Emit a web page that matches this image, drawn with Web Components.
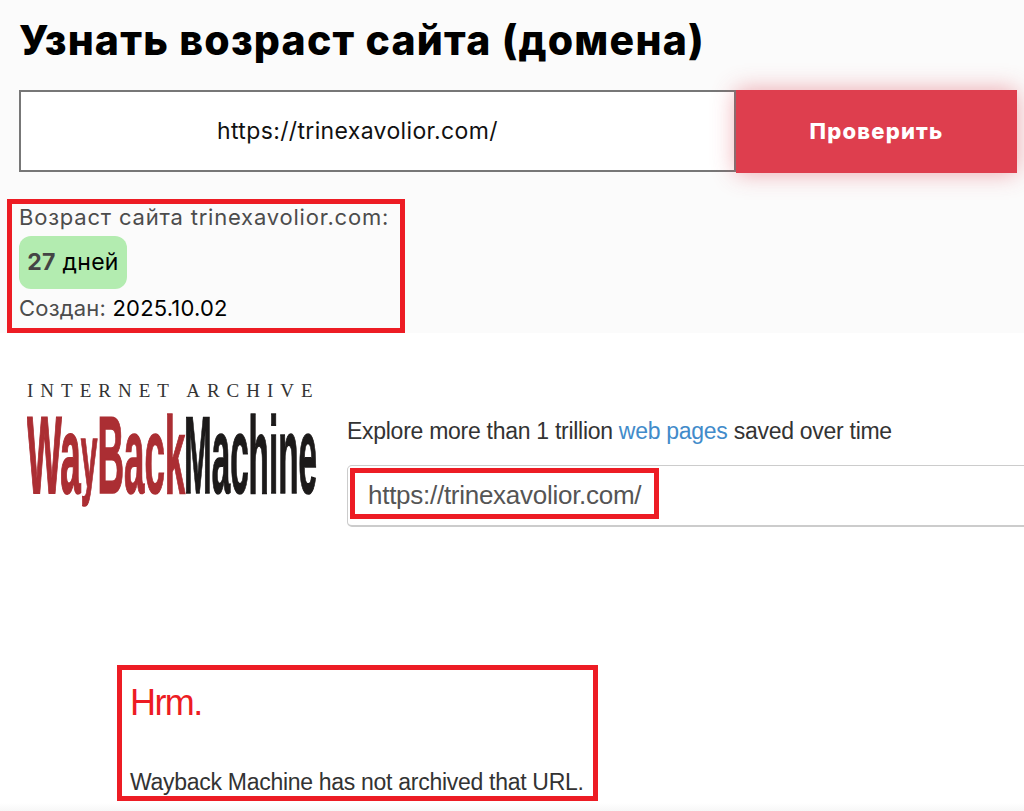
<!DOCTYPE html>
<html lang="ru">
<head>
<meta charset="utf-8">
<title>Возраст сайта</title>
<style>
  html, body { margin: 0; padding: 0; background: #fff; }
  body { width: 1024px; height: 811px; overflow: hidden; }
</style>
</head>
<body>
<age-page>
  <age-form slot="form" url="https://trinexavolior.com/"></age-form>
  <red-frame slot="result" style="--frame-w: 398px; --frame-h: 134px; --frame-pad: 5px 0 0 12px;">
    <age-result domain="trinexavolior.com" days="27" created="2025.10.02"></age-result>
  </red-frame>
</age-page>
<wayback-header url="https://trinexavolior.com/"></wayback-header>
<wayback-message></wayback-message>

<script>
class RedFrame extends HTMLElement {
  constructor() {
    super()
    this.shadow = this.attachShadow({ mode: 'open' })
  }
  connectedCallback() {
    this.shadow.innerHTML = /*html*/`
      <style>
        :host {
          display: block;
          box-sizing: border-box;
          width: var(--frame-w);
          height: var(--frame-h);
          padding: var(--frame-pad, 0);
          border: 5px solid #ed1c24;
          background: var(--frame-bg, transparent);
        }
      </style>
      <slot></slot>
    `
  }
}

class AgePage extends HTMLElement {
  constructor() {
    super()
    this.shadow = this.attachShadow({ mode: 'open' })
  }
  connectedCallback() {
    this.shadow.innerHTML = /*html*/`
      <style>
        :host {
          display: block;
          box-sizing: border-box;
          height: 333px;
          padding: 0 7px;
          background: #fbfbfb;
          font-family: Inter, "Liberation Sans", sans-serif;
        }
        h1 {
          margin: 0 0 0 12px;
          padding-top: 14px;
          height: 90px;
          box-sizing: border-box;
          font-size: 41px;
          line-height: 52px;
          font-weight: 800;
          color: #000;
          letter-spacing: 1.2px;
          white-space: nowrap;
        }
        .result { margin-top: 26px; }
      </style>
      <h1>Узнать возраст сайта (домена)</h1>
      <slot name="form"></slot>
      <div class="result"><slot name="result"></slot></div>
    `
  }
}

class AgeForm extends HTMLElement {
  constructor() {
    super()
    this.shadow = this.attachShadow({ mode: 'open' })
  }
  connectedCallback() {
    this.shadow.innerHTML = /*html*/`
      <style>
        :host {
          display: flex;
          margin-left: 12px;
          width: 998px;
          height: 83px;
        }
        .input {
          box-sizing: border-box;
          width: 717px;
          height: 82px;
          padding-right: 40px;
          border: 2px solid #777;
          background: #fff;
          color: #111;
          font-size: 23px;
          letter-spacing: .35px;
          line-height: 78px;
          text-align: center;
        }
        .btn {
          width: 281px;
          height: 83px;
          background: #de3e4e;
          box-shadow: 0 0 22px rgba(222, 62, 78, .45);
          color: #fff;
          font-size: 22px;
          font-weight: 800;
          letter-spacing: 1.2px;
          line-height: 83px;
          text-align: center;
        }
      </style>
      <div class="input">${this.getAttribute('url')}</div>
      <div class="btn">Проверить</div>
    `
  }
}

class AgeResult extends HTMLElement {
  constructor() {
    super()
    this.shadow = this.attachShadow({ mode: 'open' })
  }
  connectedCallback() {
    this.shadow.innerHTML = /*html*/`
      <style>
        :host {
          display: flex;
          flex-direction: column;
          align-items: flex-start;
          margin-left: -5px;
          margin-top: -5px;
          color: #4c4c4c;
          font-size: 22px;
          line-height: 26px;
          white-space: nowrap;
        }
        .line { letter-spacing: .8px; }
        .badge {
          margin-top: 6px;
          box-sizing: border-box;
          height: 53px;
          width: 108px;
          border-radius: 12px;
          background: #b3ecb0;
          color: #000;
          font-size: 23px;
          letter-spacing: .3px;
          line-height: 53px;
          text-align: center;
        }
        .badge b { color: #444; font-weight: 700; }
        .created { margin-top: 6px; letter-spacing: .2px; }
        .created span { color: #000; }
      </style>
      <div class="line">Возраст сайта ${this.getAttribute('domain')}:</div>
      <div class="badge"><b>${this.getAttribute('days')}</b> дней</div>
      <div class="created">Создан: <span>${this.getAttribute('created')}</span></div>
    `
  }
}

class WaybackLogo extends HTMLElement {
  constructor() {
    super()
    this.shadow = this.attachShadow({ mode: 'open' })
  }
  connectedCallback() {
    // the y is set smaller and raised so its tail stops near the reference's
    this.shadow.innerHTML = /*html*/`
      <style>
        :host { display: block; width: 292px; height: 145px; }
        svg { display: block; }
      </style>
      <svg width="292" height="145" viewBox="0 0 292 145">
        <text x="0" y="17" font-family="Liberation Serif" font-size="19" letter-spacing="7" fill="#333">INTERNET ARCHIVE</text>
        <text transform="translate(0 113) scale(.334 1)" font-family="Liberation Sans" font-weight="700" font-size="110"
              fill="#ab2e33" stroke="#ab2e33" stroke-width="1.6" vector-effect="non-scaling-stroke">Wa<tspan dy="-6" font-size="90">y</tspan><tspan dy="6">Back</tspan></text>
        <text transform="translate(157 113) scale(.302 1)" font-family="Liberation Sans" font-weight="700" font-size="110"
              fill="#1c1a1a" stroke="#1c1a1a" stroke-width="1.2" vector-effect="non-scaling-stroke">Machine</text>
      </svg>
    `
  }
}

class WaybackHeader extends HTMLElement {
  constructor() {
    super()
    this.shadow = this.attachShadow({ mode: 'open' })
  }
  connectedCallback() {
    this.shadow.innerHTML = /*html*/`
      <style>
        :host {
          display: grid;
          grid-template-columns: 320px 1fr;
          box-sizing: border-box;
          height: 332px;
          padding: 47px 0 0 27px;
          font-family: "Liberation Sans", Arial, sans-serif;
          overflow: hidden;
        }
        .right { padding-top: 37px; min-width: 0; }
        .tag {
          font-size: 23px;
          letter-spacing: -.28px;
          line-height: 28px;
          color: #333;
          white-space: nowrap;
        }
        .tag a { color: #428bca; text-decoration: none; }
        .box {
          box-sizing: border-box;
          margin-top: 20px;
          width: 720px;
          height: 62px;
          padding: 2px;
          border: 1px solid #ccc;
          border-bottom-width: 2px;
          border-radius: 5px;
          background: #fff;
        }
        red-frame {
          --frame-w: 309px;
          --frame-h: 51px;
          --frame-pad: 0 0 0 13px;
          color: #555;
          font-size: 26px;
          letter-spacing: -.27px;
          line-height: 44px;
          white-space: nowrap;
        }
      </style>
      <wayback-logo></wayback-logo>
      <div class="right">
        <div class="tag">Explore more than 1 trillion <a>web pages</a> saved over time</div>
        <div class="box"><red-frame>${this.getAttribute('url')}</red-frame></div>
      </div>
    `
  }
}

class WaybackMessage extends HTMLElement {
  constructor() {
    super()
    this.shadow = this.attachShadow({ mode: 'open' })
  }
  connectedCallback() {
    this.shadow.innerHTML = /*html*/`
      <style>
        :host {
          display: block;
          box-sizing: border-box;
          height: 146px;
          padding-left: 117px;
          font-family: "Liberation Sans", Arial, sans-serif;
          background: linear-gradient(#fff 138px, #f7f7f7 146px);
        }
        red-frame {
          --frame-w: 481px;
          --frame-h: 136px;
          --frame-pad: 0 0 0 8px;
          --frame-bg: #fff;
        }
        .hrm {
          margin: 0;
          padding-top: 12px;
          font-size: 36px;
          letter-spacing: -1.6px;
          line-height: 41px;
          font-weight: 400;
          color: #ed1c24;
        }
        .msg {
          margin-top: 45px;
          font-size: 23px;
          letter-spacing: -.29px;
          line-height: 28px;
          color: #333;
          white-space: nowrap;
        }
      </style>
      <red-frame>
        <div class="hrm">Hrm.</div>
        <div class="msg">Wayback Machine has not archived that URL.</div>
      </red-frame>
    `
  }
}

customElements.define('red-frame', RedFrame)
customElements.define('age-page', AgePage)
customElements.define('age-form', AgeForm)
customElements.define('age-result', AgeResult)
customElements.define('wayback-logo', WaybackLogo)
customElements.define('wayback-header', WaybackHeader)
customElements.define('wayback-message', WaybackMessage)
</script>
</body>
</html>
